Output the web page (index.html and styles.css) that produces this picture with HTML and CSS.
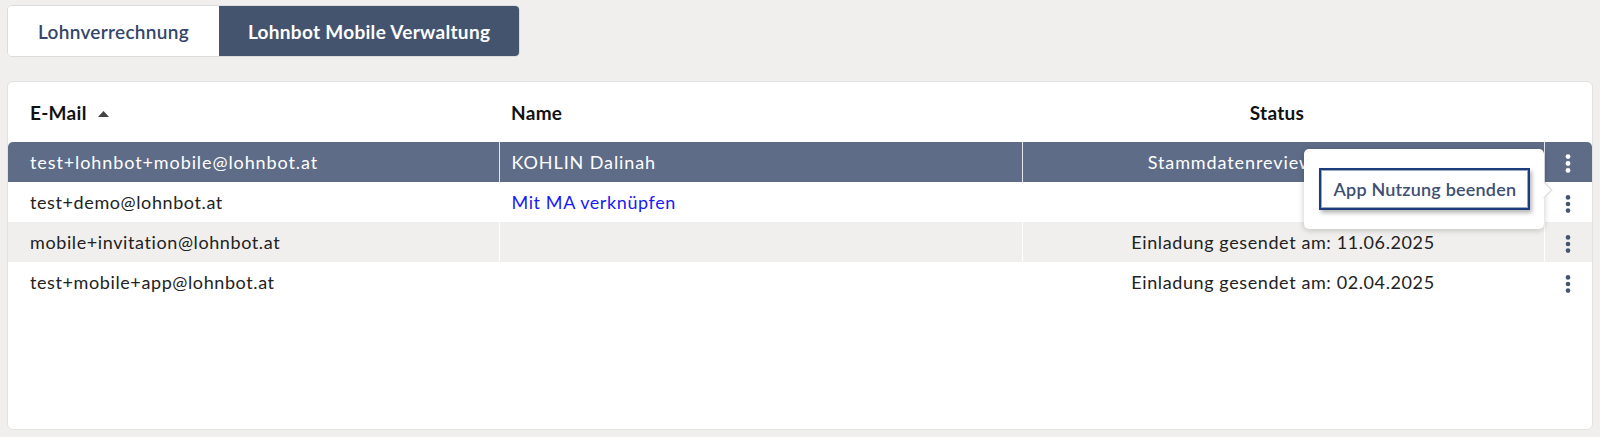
FILE: index.html
```html
<!DOCTYPE html>
<html>
  <head>
    <title>Lohnbot Mobile Verwaltung</title>
    <meta charset="utf-8" />
    <meta name="viewport" content="width=device-width, initial-scale=1.0" />
    <link rel="stylesheet" href="styles.css">
  </head>
  <body>
    <div class="tabs">
      <button class="tab">Lohnverrechnung</button>
      <button class="tab active">Lohnbot Mobile Verwaltung</button>
    </div>

    <div class="card">
      <table class="users">
        <colgroup>
          <col class="col-mail">
          <col class="col-name">
          <col class="col-status">
          <col class="col-actions">
        </colgroup>
        <thead>
          <tr>
            <th class="mail">E-Mail
              <svg class="sort" width="11" height="6" viewBox="0 0 11 6"><path d="M0 6 L5.5 0 L11 6 Z" /></svg>
            </th>
            <th class="name">Name</th>
            <th class="status">Status</th>
            <th></th>
          </tr>
        </thead>
        <tbody>
          <tr class="selected">
            <td class="mail">test+lohnbot+mobile@lohnbot.at</td>
            <td class="name">KOHLIN Dalinah</td>
            <td class="status">Stammdatenreview ausstehend</td>
            <td class="actions">
              <svg class="kebab" width="6" height="19" viewBox="0 0 6 19"><circle cx="3" cy="2.6" r="2.4" /><circle cx="3" cy="9.5" r="2.4" /><circle cx="3" cy="16.4" r="2.4" /></svg>
              <div class="popover">
                <button class="menu-item">App Nutzung beenden</button>
              </div>
            </td>
          </tr>
          <tr>
            <td class="mail">test+demo@lohnbot.at</td>
            <td class="name"><a href="#">Mit MA verknüpfen</a></td>
            <td class="status"></td>
            <td class="actions">
              <svg class="kebab" width="6" height="18" viewBox="0 0 6 18"><circle cx="3" cy="2.4" r="2.3" /><circle cx="3" cy="9" r="2.3" /><circle cx="3" cy="15.6" r="2.3" /></svg>
            </td>
          </tr>
          <tr class="striped">
            <td class="mail">mobile+invitation@lohnbot.at</td>
            <td class="name"></td>
            <td class="status">Einladung gesendet am: 11.06.2025</td>
            <td class="actions">
              <svg class="kebab" width="6" height="18" viewBox="0 0 6 18"><circle cx="3" cy="2.4" r="2.3" /><circle cx="3" cy="9" r="2.3" /><circle cx="3" cy="15.6" r="2.3" /></svg>
            </td>
          </tr>
          <tr>
            <td class="mail">test+mobile+app@lohnbot.at</td>
            <td class="name"></td>
            <td class="status">Einladung gesendet am: 02.04.2025</td>
            <td class="actions">
              <svg class="kebab" width="6" height="18" viewBox="0 0 6 18"><circle cx="3" cy="2.4" r="2.3" /><circle cx="3" cy="9" r="2.3" /><circle cx="3" cy="15.6" r="2.3" /></svg>
            </td>
          </tr>
        </tbody>
      </table>
    </div>
  </body>
</html>
```

FILE: styles.css
```css
body {
  margin: 0;
  padding: 5px 7px 7px;
  background-color: #f0efed;
  font-family: Lato, 'Noto Sans', sans-serif;
  color: #222;
}
.tabs {
  display: inline-flex;
  height: 52px;
  border: 1px solid #dcdcdc;
  border-radius: 5px;
  overflow: hidden;
  box-sizing: border-box;
}
.tab {
  border: none;
  margin: 0;
  padding: 0 30px;
  background: #fff;
  color: #34466b;
  font-family: inherit;
  font-size: 19px;
  font-weight: 600;
  letter-spacing: 0.3px;
  cursor: pointer;
}
.tab.active {
  background: #44546f;
  color: #fff;
  font-weight: 700;
  padding: 0 29px;
}
.card {
  margin-top: 24px;
  height: 349px;
  box-sizing: border-box;
  background: #fff;
  border: 1px solid #e2e2e0;
  border-radius: 6px;
}
.users {
  width: 100%;
  border-collapse: collapse;
  table-layout: fixed;
  font-size: 18px;
  letter-spacing: 0.6px;
}
.col-mail { width: 491px; }
.col-name { width: 523px; }
.col-status { width: 522px; }
.col-actions { width: 48px; }

.users th {
  height: 60px;
  padding: 0;
  font-size: 19px;
  font-weight: 700;
  letter-spacing: 0.3px;
  color: #111;
  text-align: left;
  vertical-align: middle;
}
.users th.status {
  text-align: center;
  padding-right: 12px;
}
.sort {
  fill: #444;
  margin-left: 6px;
  vertical-align: 3px;
}
.users td {
  height: 40px;
  padding: 0;
  vertical-align: middle;
  border-left: 1px solid #fff;
  white-space: nowrap;
  overflow: hidden;
}
.users td:first-child {
  border-left: none;
}
.users .mail {
  padding-left: 22px;
}
.users .name {
  padding-left: 12px;
}
.users td.status {
  text-align: center;
}
.users td.actions {
  text-align: center;
  overflow: visible;
  position: relative;
}
.selected td {
  background: #5e6c88;
  color: #fff;
  border-left-color: #e4e7ed;
  letter-spacing: 0.9px;
}
.selected td:first-child {
  border-top-left-radius: 5px;
}
.selected td:last-child {
  border-top-right-radius: 5px;
}
.striped td {
  background: #f0efed;
}
.users a {
  color: #1a1af5;
  text-decoration: none;
}
.kebab {
  display: inline-block;
  vertical-align: middle;
  fill: #44546f;
}
.selected .kebab {
  fill: #fff;
}
.popover {
  position: absolute;
  right: 100%;
  margin-right: 1px;
  top: 7px;
  width: 240px;
  height: 80px;
  box-sizing: border-box;
  padding: 19px 14px 0 15px;
  background: #fff;
  border-radius: 5px;
  box-shadow: 0 1px 6px rgba(0, 0, 0, 0.22);
  text-align: left;
  letter-spacing: 0;
  z-index: 5;
}
.popover::after {
  content: '';
  position: absolute;
  right: -6px;
  top: 35px;
  width: 11px;
  height: 11px;
  background: #fff;
  border-top: 1px solid #d8d8d8;
  border-right: 1px solid #d8d8d8;
  transform: rotate(45deg);
}
.menu-item {
  width: 211px;
  height: 42px;
  margin: 0;
  padding: 0 0 0 13px;
  box-sizing: border-box;
  background: #fff;
  border: 2px solid #1d3c7c;
  box-shadow: inset 0 0 0 1px #9aa8c6, 2px 3px 4px rgba(0, 0, 0, 0.28);
  color: #3d4f73;
  font-family: inherit;
  font-size: 18px;
  font-weight: 600;
  letter-spacing: 0.2px;
  text-align: left;
  cursor: pointer;
}
```
